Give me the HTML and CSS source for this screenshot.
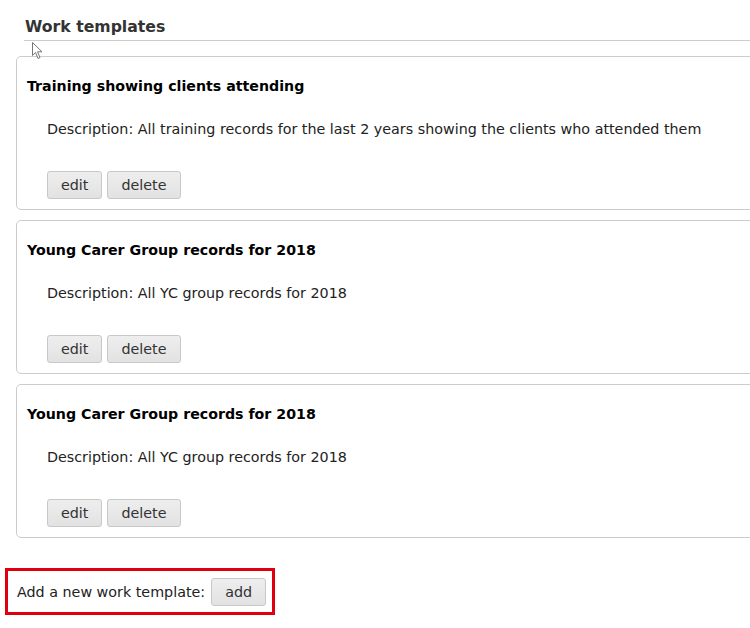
FILE: index.html
```html
<!DOCTYPE html>
<html>
<head>
<meta charset="utf-8">
<link rel="stylesheet" href="styles.css">
</head>
<body>
<div class="page">
  <h2 class="section-title">Work templates</h2>
  <div class="cards">
    <div class="card">
      <h3 class="card-title">Training showing clients attending</h3>
      <p class="card-desc">Description: All training records for the last 2 years showing the clients who attended them</p>
      <div class="actions"><button class="btn">edit</button><button class="btn">delete</button></div>
    </div>
    <div class="card">
      <h3 class="card-title">Young Carer Group records for 2018</h3>
      <p class="card-desc">Description: All YC group records for 2018</p>
      <div class="actions"><button class="btn">edit</button><button class="btn">delete</button></div>
    </div>
    <div class="card">
      <h3 class="card-title">Young Carer Group records for 2018</h3>
      <p class="card-desc">Description: All YC group records for 2018</p>
      <div class="actions"><button class="btn">edit</button><button class="btn">delete</button></div>
    </div>
  </div>
  <div class="add-box">
    <span class="add-label">Add a new work template:</span>
    <button class="btn">add</button>
  </div>
  <svg class="cursor" width="12" height="18" viewBox="0 0 12 18"><path d="M0.5 0.5 L0.5 13.5 L3.5 10.5 L6 16.5 L8 15.5 L5.5 9.8 L10 9.8 Z" fill="#fff" stroke="#777" stroke-width="1"/></svg>
</div>
</body>
</html>
```
FILE: styles.css
```css
html, body {
  margin: 0;
  padding: 0;
  background: #fff;
  overflow: hidden;
}
body {
  font-family: "DejaVu Sans", Verdana, sans-serif;
  color: #222;
  font-size: 14.3px;
}
.page {
  position: relative;
  padding: 16px 0 0 0;
  width: 770px;
}
.section-title {
  margin: 0 0 15px 24px;
  padding: 0 0 2px 1px;
  font-size: 15.7px;
  font-weight: bold;
  color: #333;
  border-bottom: 1px solid #ccc;
  line-height: 22px;
}
.cards {
  display: flex;
  flex-direction: column;
  gap: 10px;
  margin-left: 16px;
}
.card {
  border: 1px solid #ccc;
  border-radius: 5px;
  height: 154px;
  box-sizing: border-box;
  padding: 20px 10px 10px 10px;
}
.card-title {
  margin: 0;
  font-size: 14.2px;
  font-weight: bold;
  color: #000;
  line-height: 18px;
}
.card-desc {
  margin: 25px 0 0 20px;
  line-height: 18px;
  color: #222;
}
.actions {
  display: flex;
  gap: 5px;
  margin: 33px 0 0 20px;
}
.btn {
  font-family: "DejaVu Sans", Verdana, sans-serif;
  font-size: 14.3px;
  color: #333;
  background: linear-gradient(#eeeeee, #e2e2e2);
  border: 1px solid #c8c8c8;
  border-radius: 3px;
  height: 28px;
  padding: 0 13px;
}
.add-box {
  display: inline-flex;
  align-items: center;
  gap: 6px;
  margin: 30px 0 0 5px;
  border: 3px solid #e0000d;
  padding: 7px 6px 7px 9px;
  height: 47px;
  box-sizing: border-box;
}
.add-label {
  color: #222;
}
.cursor {
  position: absolute;
  left: 32px;
  top: 42px;
}
```
